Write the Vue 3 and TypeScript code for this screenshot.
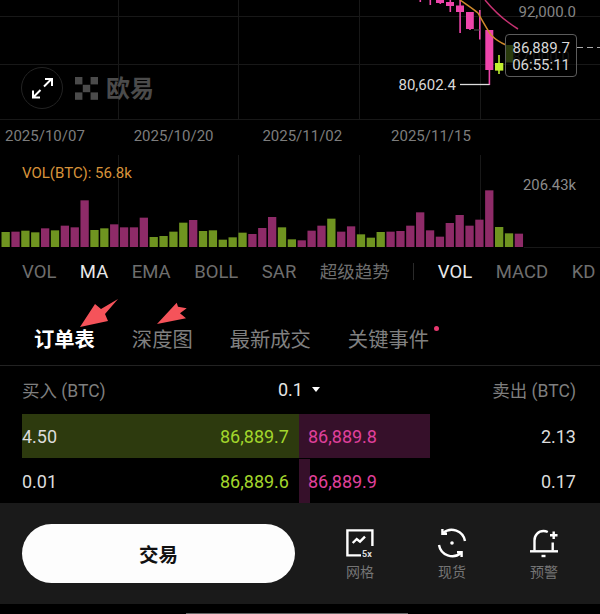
<script setup lang="ts">
type Bar = { x: number; y: number; h: number; up: boolean }

const tops: [number, boolean][] = [
  [231, true], [230, false], [227, true], [232, true], [220, false], [226, true], [212, false], [217, false],
  [136, false], [225, true], [220, true], [208, false], [217, false], [217, false], [188, false], [246, true],
  [243, true], [230, true], [203, true], [195, false], [228, true], [226, true], [254, true], [247, true],
  [233, true], [237, false], [219, false], [186, false], [217, true], [253, true], [256, false], [227, false],
  [212, false], [191, true], [230, false], [214, false], [238, true], [248, true], [231, true], [230, false],
  [228, false], [212, false], [172, false], [226, false], [245, false], [204, false], [180, false], [212, false],
  [194, false], [106, false], [216, true], [235, true], [236, false],
]

const bars: Bar[] = tops.map(([top, up], i) => ({
  x: 1.5 + i * 9.87,
  y: (top - 276) / 3 + 92,
  h: (276 - top) / 3,
  up,
}))

const gridX = [118.5, 238.5, 359.5, 480.5]
const dates = ['2025/10/07', '2025/10/20', '2025/11/02', '2025/11/15']
const indicatorsA = [
  { label: 'VOL', on: false, cjk: false },
  { label: 'MA', on: true, cjk: false },
  { label: 'EMA', on: false, cjk: false },
  { label: 'BOLL', on: false, cjk: false },
  { label: 'SAR', on: false, cjk: false },
  { label: '超级趋势', on: false, cjk: true },
]
const indicatorsB = [
  { label: 'VOL', on: true },
  { label: 'MACD', on: false },
  { label: 'KD', on: false },
]
const tabs = [
  { label: '订单表', on: true, dot: false },
  { label: '深度图', on: false, dot: false },
  { label: '最新成交', on: false, dot: false },
  { label: '关键事件', on: false, dot: true },
]
const rows = [
  { bid: '4.50', bidPrice: '86,889.7', askPrice: '86,889.8', ask: '2.13', bidW: 276.5, askW: 131.5 },
  { bid: '0.01', bidPrice: '86,889.6', askPrice: '86,889.9', ask: '0.17', bidW: 0, askW: 11 },
]
</script>

<template>
  <div class="page">
    <section class="price">
      <svg class="canvas" width="600" height="120" viewBox="0 0 600 120">
        <g class="grid">
          <line x1="0" x2="600" y1="16.5" y2="16.5" />
          <line x1="0" x2="600" y1="64.5" y2="64.5" />
          <line x1="0" x2="600" y1="119.5" y2="119.5" />
          <line v-for="x in gridX" :key="x" :x1="x" :x2="x" y1="0" y2="119" />
        </g>
        <text x="576" y="17" text-anchor="end" class="axis">92,000.0</text>

        <g class="logo-mark">
          <rect x="75" y="77" width="7.4" height="7.4" />
          <rect x="90.6" y="77" width="7.4" height="7.4" />
          <rect x="82.8" y="84.8" width="7.4" height="7.4" />
          <rect x="75" y="92.4" width="7.4" height="7.4" />
          <rect x="90.6" y="92.4" width="7.4" height="7.4" />
        </g>
        <text x="106" y="97" class="logo-text">欧易</text>

        <circle cx="42" cy="88" r="20.5" class="expand-ring" />
        <path class="expand" d="M44 86.5 L51.5 79 M45 79 H52 V86 M40.5 90 L33 97.5 M33 90.5 V97.5 H40" />

        <g class="candles">
          <rect x="419.5" y="0" width="1.6" height="2" />
          <rect x="429.5" y="0" width="1.6" height="5" />
          <rect x="436" y="0" width="8" height="3" />
          <rect x="439.5" y="0" width="1.6" height="4" />
          <rect x="446" y="2" width="8" height="4" />
          <rect x="449.5" y="0" width="1.6" height="12" />
          <rect x="456" y="5.5" width="8" height="6.5" />
          <rect x="459.3" y="0" width="1.6" height="33" />
          <rect x="466" y="12" width="7.8" height="17" />
          <rect x="469.2" y="12" width="1.6" height="18" />
          <rect x="479" y="10" width="1.6" height="29.5" />
          <rect x="485.3" y="30" width="8" height="40" />
          <rect x="488.6" y="30" width="1.6" height="55" />
        </g>
        <rect x="474" y="29.5" width="6" height="1" fill="#555" />
        <rect x="498.2" y="55" width="1.6" height="19" fill="#b9ec2e" />
        <rect x="495" y="63" width="8.3" height="7.6" fill="#c3f02f" />
        <rect x="506" y="45" width="7.5" height="17.5" fill="#4e6c18" />

        <path class="line-pink" d="M485 0 C494 11 505 21 518 29" />
        <path class="line-orange" d="M460 0 C467 5 473 9 478 13 C482 20 487 29 491 35 C496 40 501 43 506 45" />

        <line x1="460" x2="489.5" y1="84.5" y2="84.5" class="low-line" />
        <text x="456" y="90" text-anchor="end" class="low">80,602.4</text>

        <text x="570" y="62" text-anchor="end" class="ghost">87,000.0</text>
        <rect x="505.5" y="34.5" width="71" height="42" rx="3.5" class="tag" />
        <text x="570" y="53" text-anchor="end" class="tag-text">86,889.7</text>
        <text x="570" y="70" text-anchor="end" class="tag-text">06:55:11</text>
        <line x1="577" x2="600" y1="47.5" y2="47.5" class="dash" />
      </svg>
    </section>

    <div class="dates">
      <span v-for="d in dates" :key="d" class="date">{{ d }}</span>
    </div>

    <section class="volume">
      <svg class="canvas" width="600" height="93" viewBox="0 0 600 93">
        <g class="grid">
          <line v-for="x in gridX" :key="x" :x1="x" :x2="x" y1="0" y2="92" />
          <line x1="524" x2="600" y1="92.5" y2="92.5" />
        </g>
        <rect
          v-for="(b, i) in bars"
          :key="i"
          :x="b.x"
          :y="b.y"
          width="8.3"
          :height="b.h"
          :fill="b.up ? '#6f9420' : '#8e2b68'"
        />
        <text x="22" y="23" class="vol-label">VOL(BTC): 56.8k</text>
        <text x="523" y="35" class="vol-max">206.43k</text>
      </svg>
    </section>

    <nav class="indicators">
      <span v-for="it in indicatorsA" :key="it.label" class="ind" :class="{ on: it.on, cjk: it.cjk }">{{ it.label }}</span>
      <i class="ind-sep"></i>
      <span v-for="it in indicatorsB" :key="it.label" class="ind" :class="{ on: it.on }">{{ it.label }}</span>
    </nav>

    <nav class="tabs">
      <span v-for="t in tabs" :key="t.label" class="tab" :class="{ on: t.on }">
        {{ t.label }}
        <i v-if="t.dot" class="dot"></i>
      </span>
      <svg class="arrows" width="200" height="40" viewBox="0 0 200 40">
        <polygon points="80,37 95,14 101,19 118,9 105,24 108,31" />
        <polygon points="157,34 176.7,12.7 178,16.7 186.7,18.3 180,23.3 186,28.3" />
      </svg>
    </nav>

    <div class="head">
      <span class="head-side">买入 (BTC)</span>
      <span class="step">0.1<i class="caret"></i></span>
      <span class="head-side">卖出 (BTC)</span>
    </div>

    <div class="book">
      <div v-for="r in rows" :key="r.bidPrice" class="row">
        <div class="side bid">
          <i class="depth depth-bid" :style="{ width: r.bidW + 'px' }"></i>
          <span class="qty">{{ r.bid }}</span>
          <span class="px-bid">{{ r.bidPrice }}</span>
        </div>
        <div class="side ask">
          <i class="depth depth-ask" :style="{ width: r.askW + 'px' }"></i>
          <span class="px-ask">{{ r.askPrice }}</span>
          <span class="qty">{{ r.ask }}</span>
        </div>
      </div>
    </div>

    <footer class="bar">
      <button class="trade">交易</button>
      <div class="tools">
        <div class="tool">
          <svg width="28" height="30" viewBox="0 -1 28 30" class="ico">
            <path d="M26.4 17 V1.4 H1.4 V26.4 H15" />
            <path d="M6.7 14 L10.7 10 L14 12.7 L19 7.7" />
            <text x="16" y="27.5" class="five">5x</text>
          </svg>
          <span class="tool-label">网格</span>
        </div>
        <div class="tool">
          <svg width="30" height="30" viewBox="0 0 30 30" class="ico">
            <path d="M28 13 A13.5 13.5 0 0 0 6 5" />
            <path d="M5.4 1 V5.8 H10" />
            <path d="M2 17 A13.5 13.5 0 0 0 24 25" />
            <path d="M24.6 29 V24.2 H20" />
            <circle cx="15" cy="15" r="1.8" class="fill" />
          </svg>
          <span class="tool-label">现货</span>
        </div>
        <div class="tool">
          <svg width="28" height="30" viewBox="0 0 28 30" class="ico">
            <path d="M4.5 22.5 V12.5 A9 9 0 0 1 13.5 3 C15 3 16.5 3.4 17.8 4" />
            <path d="M22.7 14.5 V22.5" />
            <path d="M0 23.3 H28" />
            <path d="M20 7.3 H27.5 M23.7 3.5 V11" />
            <path d="M11.5 28 H15.5" />
          </svg>
          <span class="tool-label">预警</span>
        </div>
      </div>
    </footer>
    <div class="home"><i class="home-bar"></i></div>
  </div>
</template>

<style scoped>
.page {
  width: 600px;
  height: 614px;
  background: #000;
  display: flex;
  flex-direction: column;
  overflow: hidden;
  font-family: Roboto, "Noto Sans CJK SC", sans-serif;
}
.price, .volume { flex: none; }
.price { height: 120px; }
.volume { height: 93px; }
.canvas { display: block; }
.grid line { stroke: #181818; stroke-width: 1; }
.axis { font-size: 15px; fill: #858585; }
.logo-mark { fill: #4b4b4b; }
.logo-text { font-size: 24px; font-weight: 700; fill: #4b4b4b; font-family: "Noto Sans CJK SC", sans-serif; }
.expand-ring { fill: none; stroke: #232323; stroke-width: 1; }
.expand { fill: none; stroke: #fff; stroke-width: 2; }
.candles { fill: #ee45ab; }
.line-pink { fill: none; stroke: #c73272; stroke-width: 1.5; }
.line-orange { fill: none; stroke: #d08a2c; stroke-width: 1.5; }
.low-line { stroke: #ddd; stroke-width: 1.3; }
.low { font-size: 15px; fill: #d8d8d8; }
.ghost { font-size: 15px; fill: #2a2a2a; }
.tag { fill: rgba(0, 0, 0, 0.45); stroke: #5c5c5c; stroke-width: 1; }
.tag-text { font-size: 15px; fill: #d8d8d8; }
.dash { stroke: #aaa; stroke-width: 1.2; stroke-dasharray: 6 4; }

.dates {
  flex: none;
  height: 35px;
  padding: 0 0 3px 5px;
  box-sizing: border-box;
  display: flex;
  align-items: center;
}
.date { width: 128.7px; font-size: 15px; color: #7d7d7d; }

.vol-label { font-size: 15px; fill: #d8933a; }
.vol-max { font-size: 14.8px; fill: #8c8c8c; }

.indicators {
  flex: none;
  height: 47px;
  padding-left: 22px;
  display: flex;
  align-items: center;
  gap: 23.5px;
  white-space: nowrap;
  overflow: hidden;
}
.ind { flex: none; font-size: 18.5px; color: #6e6e6e; line-height: 24px; }
.ind.cjk { font-size: 17.5px; }
.ind.on { color: #e8e8e8; }
.ind-sep { flex: none; width: 1px; height: 17px; background: #2a2a2a; }

.tabs {
  flex: none;
  position: relative;
  height: 71px;
  box-sizing: border-box;
  padding: 29px 0 13px 34px;
  display: flex;
  gap: 37px;
  border-bottom: 1px solid #222;
}
.tab {
  position: relative;
  font-size: 20.3px;
  line-height: 28px;
  color: #808080;
  font-family: "Noto Sans CJK SC", sans-serif;
}
.tab.on { color: #fff; font-weight: 700; }
.dot {
  position: absolute;
  right: -9.5px;
  top: 2px;
  width: 5px;
  height: 5px;
  border-radius: 50%;
  background: #e8386f;
}
.arrows { position: absolute; left: 0; top: -5px; fill: #f5535a; }

.head {
  flex: none;
  height: 48px;
  padding: 0 24px 2px 22px;
  box-sizing: border-box;
  display: flex;
  align-items: center;
  justify-content: space-between;
}
.head-side { font-size: 17.5px; color: #7e7e7e; width: 100px; white-space: nowrap; }
.head-side:last-child { text-align: right; }
.step { font-size: 18px; color: #e6e6e6; display: flex; align-items: center; gap: 9px; }
.caret {
  width: 0;
  height: 0;
  border-left: 4.5px solid transparent;
  border-right: 4.5px solid transparent;
  border-top: 5px solid #fff;
}

.book { flex: none; padding: 0 24px 0 22px; display: flex; flex-direction: column; gap: 1px; }
.row { height: 44px; display: flex; font-size: 18px; }
.side { position: relative; display: flex; align-items: center; justify-content: space-between; }
.side > span { position: relative; }
.bid { width: 276.5px; padding-right: 9.5px; box-sizing: border-box; }
.ask { flex: 1; padding-left: 9.5px; }
.depth { position: absolute; top: 0; bottom: 0; }
.depth-bid { right: 0; background: #2d3a0e; }
.depth-ask { left: 0; background: #36102a; }
.qty { color: #dcdcdc; }
.px-bid { color: #a2d62c; }
.px-ask { color: #e0409c; }

.bar {
  flex: none;
  height: 101px;
  background: #1a1a1a;
  display: flex;
  align-items: center;
  padding-left: 22px;
}
.trade {
  width: 273px;
  height: 59px;
  margin-top: -1px;
  border: 0;
  border-radius: 30px;
  background: #fdfdfd;
  color: #111;
  font-size: 19.5px;
  font-weight: 700;
  font-family: "Noto Sans CJK SC", sans-serif;
}
.tools { margin-left: 19px; display: flex; padding-top: 2px; }
.tool { width: 92px; display: flex; flex-direction: column; align-items: center; gap: 3px; }
.tool svg { height: 30px; }
.ico { fill: none; stroke: #fff; stroke-width: 2.4; }
.ico .fill { fill: #fff; stroke: none; }
.five { font-size: 9px; font-weight: 700; fill: #ddd; stroke: none; }
.tool-label { font-size: 14px; line-height: 20px; color: #757575; font-family: "Noto Sans CJK SC", sans-serif; }

.home { flex: 1; position: relative; }
.home-bar {
  position: absolute;
  left: 186px;
  width: 222px;
  height: 2px;
  top: 8.5px;
  background: #666;
}
</style>

<style>
html, body { background: #000; }
</style>
